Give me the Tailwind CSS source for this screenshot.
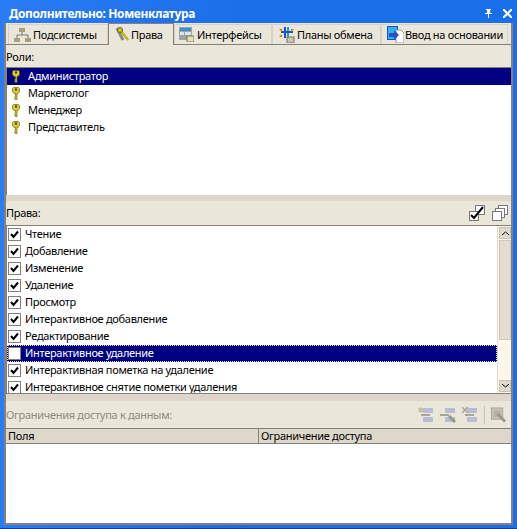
<!DOCTYPE html>
<html lang="ru">
<head>
    <meta charset="UTF-8">
    <title>Дополнительно: Номенклатура</title>
    <script src="https://cdn.jsdelivr.net/npm/@tailwindcss/browser@4"></script>
</head>
<body class="w-[517px] h-[529px] overflow-hidden bg-[#0f5fe6] font-['Noto_Sans',sans-serif] text-[11px] leading-[13px] tracking-[-0.3px] text-black">
<div class="flex flex-col h-[529px] bg-gradient-to-r from-[#2a7cf5] via-[#1a6ee8] to-[#1a6ee8] pb-[3px] px-[4px] border-b border-[#0a3fb5]">

    <!-- Title bar -->
    <div class="flex items-center h-[23px] shrink-0 pt-[3px]">
        <span class="flex-1 pl-[5px] text-[12px] font-bold tracking-[-0.37px] text-white">Дополнительно: Номенклатура</span>
        <svg class="w-[7px] h-[9px] mr-[11px]" viewBox="0 0 7 9" fill="#fff"><path d="M1 0h5v1H5v3h2v1H4v4H3V5H0V4h2V1H1z"/></svg>
        <svg class="w-[9px] h-[9px] mr-[1px]" viewBox="0 0 9 9" stroke="#fff" stroke-width="2"><path d="M0 0l9 9M9 0L0 9"/></svg>
    </div>

    <div class="flex flex-col flex-1 min-h-0 bg-[#ebe6da] border-l-[2px] border-r-[2px] border-b-[2px] border-[#85807a]">

        <!-- Tabs -->
        <div class="flex items-end h-[22px] shrink-0 pl-[2px] border-b border-[#85807a]">
            <div class="flex items-center gap-[2px] h-[20px] w-[100px] pl-[5px] border border-b-0 border-[#d8d2c4]">
                <svg class="w-[17px] h-[14px]" viewBox="0 0 17 14"><path d="M8 3v4M3 11V7h11v4" stroke="#777" fill="none"/><rect x="5" y="0" width="6" height="4" fill="#a89f7c"/><rect x="0" y="10" width="6" height="4" fill="#a89f7c"/><rect x="11" y="10" width="6" height="4" fill="#a89f7c"/></svg>
                <span>Подсистемы</span>
            </div>
            <div class="flex items-center gap-[1px] h-[22px] w-[66px] pl-[5px] -mb-px border border-b-0 border-[#85807a] bg-[#ebe6da]">
                <svg class="w-[16px] h-[15px]" viewBox="0 0 16 15"><path d="M3 1l6 12" stroke="#8a8a8a" stroke-width="3" fill="none"/><path d="M7 4l7 9" stroke="#c9b21a" stroke-width="2.500" fill="none"/><circle cx="6" cy="3" r="2.500" fill="#d4c31c" stroke="#6f6510"/></svg>
                <span>Права</span>
            </div>
            <div class="flex items-center gap-[3px] h-[20px] w-[98px] pl-[4px] border border-b-0 border-[#d8d2c4]">
                <svg class="w-[15px] h-[15px]" viewBox="0 0 15 15"><rect x="0" y="0" width="13" height="13" fill="#9aa3a8"/><rect x="1" y="1" width="11" height="3" fill="#3d8fc9"/><rect x="1" y="5" width="4" height="3" fill="#dfe6ea"/><rect x="6" y="5" width="6" height="3" fill="#dfe6ea"/><rect x="8" y="9" width="7" height="6" fill="#e8e0a8" stroke="#777"/></svg>
                <span>Интерфейсы</span>
            </div>
            <div class="flex items-center gap-[2px] h-[20px] w-[109px] pl-[6px] border border-b-0 border-[#d8d2c4]">
                <svg class="w-[16px] h-[16px]" viewBox="0 0 16 16"><rect x="5" y="0" width="2" height="11" fill="#1f4fc4"/><rect x="8" y="0" width="2" height="11" fill="#1a9ad6"/><rect x="2" y="4" width="12" height="2" fill="#1f4fc4"/><path d="M0 2l3 0 0 3zM15 2l-3 0 0 3zM0 10l3 0 0-3z" fill="#c07a2a"/><rect x="8" y="10" width="7" height="6" fill="#c8c4a8" stroke="#777"/></svg>
                <span>Планы обмена</span>
            </div>
            <div class="flex items-center gap-[1px] h-[20px] w-[127px] pl-[5px] border border-b-0 border-[#d8d2c4] whitespace-nowrap">
                <svg class="w-[17px] h-[17px]" viewBox="0 0 17 17"><rect x=".5" y=".5" width="10" height="13" fill="#2fb4ee" stroke="#1f4fc4"/><path d="M9 4h5l3 3v10H9z" fill="#fff" stroke="#8a9ab0"/><path d="M2 7h5V4l5 5-5 5v-3H2z" fill="#2a4fc0"/></svg>
                <span>Ввод на основании</span>
            </div>
        </div>

        <!-- Roles -->
        <div class="h-[22px] shrink-0 flex items-center">Роли:</div>
        <div class="h-[128px] shrink-0 bg-white border-l border-t border-[#85807a]">
            <div class="flex items-center h-[17px] pl-[5px] gap-[8px] bg-[#000080] text-white">
                <svg class="w-[8px] h-[13px]" viewBox="0 0 8 13"><path d="M1.500.5h5l1 1v3l-1.500 2H5v6H3.500L2.500 12l1-1-1-1 1-1V6.500H2L.5 4.500v-3z" fill="#dccb1e" stroke="#6b6410" stroke-width=".7"/><rect x="3" y="1.500" width="2" height="2" fill="#3a3510"/></svg>
                <span class="pb-[2px]">Администратор</span>
            </div>
            <div class="flex items-center h-[17px] pl-[5px] gap-[8px]">
                <svg class="w-[8px] h-[13px]" viewBox="0 0 8 13"><path d="M1.500.5h5l1 1v3l-1.500 2H5v6H3.500L2.500 12l1-1-1-1 1-1V6.500H2L.5 4.500v-3z" fill="#dccb1e" stroke="#6b6410" stroke-width=".7"/><rect x="3" y="1.500" width="2" height="2" fill="#3a3510"/></svg>
                <span class="pb-[2px]">Маркетолог</span>
            </div>
            <div class="flex items-center h-[17px] pl-[5px] gap-[8px]">
                <svg class="w-[8px] h-[13px]" viewBox="0 0 8 13"><path d="M1.500.5h5l1 1v3l-1.500 2H5v6H3.500L2.500 12l1-1-1-1 1-1V6.500H2L.5 4.500v-3z" fill="#dccb1e" stroke="#6b6410" stroke-width=".7"/><rect x="3" y="1.500" width="2" height="2" fill="#3a3510"/></svg>
                <span class="pb-[2px]">Менеджер</span>
            </div>
            <div class="flex items-center h-[17px] pl-[5px] gap-[8px]">
                <svg class="w-[8px] h-[13px]" viewBox="0 0 8 13"><path d="M1.500.5h5l1 1v3l-1.500 2H5v6H3.500L2.500 12l1-1-1-1 1-1V6.500H2L.5 4.500v-3z" fill="#dccb1e" stroke="#6b6410" stroke-width=".7"/><rect x="3" y="1.500" width="2" height="2" fill="#3a3510"/></svg>
                <span class="pb-[2px]">Представитель</span>
            </div>
        </div>
        <div class="h-[6px] shrink-0 bg-[#ddd6c9]"></div>

        <!-- Rights -->
        <div class="flex items-center h-[24px] shrink-0">
            <span class="flex-1 pb-[2px]">Права:</span>
            <svg class="w-[16px] h-[16px] mr-[7px]" viewBox="0 0 16 16" fill="#fff" stroke="#777"><rect x="6.500" y=".5" width="9" height="9"/><rect x=".5" y="6.500" width="9" height="9"/><path d="M2 10l3 3L14 2" fill="none" stroke="#000" stroke-width="2"/></svg>
            <svg class="w-[16px] h-[16px] mr-[3px]" viewBox="0 0 16 16" fill="#fff" stroke="#777"><rect x="6.500" y=".5" width="9" height="9"/><rect x="3.500" y="3.500" width="9" height="9"/><rect x=".5" y="6.500" width="9" height="9"/></svg>
        </div>
        <div class="flex h-[169px] shrink-0 bg-white border-l border-t border-b border-[#85807a]">
            <div class="flex-1 overflow-hidden">
                <div class="flex items-center h-[17px] pl-[1px] gap-[4px]"><span class="flex items-center justify-center w-[13px] h-[13px] border border-[#85807a] bg-white"><svg class="w-[9px] h-[9px]" viewBox="0 0 9 9"><path d="M1 4l2.500 3L8 1.500" fill="none" stroke="#000" stroke-width="2"/></svg></span><span class="pb-[2px]">Чтение</span></div>
                <div class="flex items-center h-[17px] pl-[1px] gap-[4px]"><span class="flex items-center justify-center w-[13px] h-[13px] border border-[#85807a] bg-white"><svg class="w-[9px] h-[9px]" viewBox="0 0 9 9"><path d="M1 4l2.500 3L8 1.500" fill="none" stroke="#000" stroke-width="2"/></svg></span><span class="pb-[2px]">Добавление</span></div>
                <div class="flex items-center h-[17px] pl-[1px] gap-[4px]"><span class="flex items-center justify-center w-[13px] h-[13px] border border-[#85807a] bg-white"><svg class="w-[9px] h-[9px]" viewBox="0 0 9 9"><path d="M1 4l2.500 3L8 1.500" fill="none" stroke="#000" stroke-width="2"/></svg></span><span class="pb-[2px]">Изменение</span></div>
                <div class="flex items-center h-[17px] pl-[1px] gap-[4px]"><span class="flex items-center justify-center w-[13px] h-[13px] border border-[#85807a] bg-white"><svg class="w-[9px] h-[9px]" viewBox="0 0 9 9"><path d="M1 4l2.500 3L8 1.500" fill="none" stroke="#000" stroke-width="2"/></svg></span><span class="pb-[2px]">Удаление</span></div>
                <div class="flex items-center h-[17px] pl-[1px] gap-[4px]"><span class="flex items-center justify-center w-[13px] h-[13px] border border-[#85807a] bg-white"><svg class="w-[9px] h-[9px]" viewBox="0 0 9 9"><path d="M1 4l2.500 3L8 1.500" fill="none" stroke="#000" stroke-width="2"/></svg></span><span class="pb-[2px]">Просмотр</span></div>
                <div class="flex items-center h-[17px] pl-[1px] gap-[4px]"><span class="flex items-center justify-center w-[13px] h-[13px] border border-[#85807a] bg-white"><svg class="w-[9px] h-[9px]" viewBox="0 0 9 9"><path d="M1 4l2.500 3L8 1.500" fill="none" stroke="#000" stroke-width="2"/></svg></span><span class="pb-[2px]">Интерактивное добавление</span></div>
                <div class="flex items-center h-[17px] pl-[1px] gap-[4px]"><span class="flex items-center justify-center w-[13px] h-[13px] border border-[#85807a] bg-white"><svg class="w-[9px] h-[9px]" viewBox="0 0 9 9"><path d="M1 4l2.500 3L8 1.500" fill="none" stroke="#000" stroke-width="2"/></svg></span><span class="pb-[2px]">Редактирование</span></div>
                <div class="flex items-center h-[17px] gap-[4px] bg-[#000080] text-white border border-dotted border-[#e8e0a0]"><span class="w-[13px] h-[13px] border border-[#85807a] bg-white"></span><span class="pb-[2px]">Интерактивное удаление</span></div>
                <div class="flex items-center h-[17px] pl-[1px] gap-[4px]"><span class="flex items-center justify-center w-[13px] h-[13px] border border-[#85807a] bg-white"><svg class="w-[9px] h-[9px]" viewBox="0 0 9 9"><path d="M1 4l2.500 3L8 1.500" fill="none" stroke="#000" stroke-width="2"/></svg></span><span class="pb-[2px]">Интерактивная пометка на удаление</span></div>
                <div class="flex items-center h-[17px] pl-[1px] gap-[4px]"><span class="flex items-center justify-center w-[13px] h-[13px] border border-[#85807a] bg-white"><svg class="w-[9px] h-[9px]" viewBox="0 0 9 9"><path d="M1 4l2.500 3L8 1.500" fill="none" stroke="#000" stroke-width="2"/></svg></span><span class="pb-[2px]">Интерактивное снятие пометки удаления</span></div>
            </div>
            <!-- Scrollbar -->
            <div class="flex flex-col w-[14px] shrink-0 bg-[#fdf6ea] border-l border-[#e0dace] pl-px">
                <div class="flex items-center justify-center h-[12px] shrink-0 mt-px bg-[#dfdacb] border border-[#c9c3b4]"><svg class="w-[7px] h-[4px]" viewBox="0 0 7 4"><path d="M0 4l3.500-3L7 4" fill="none" stroke="#000"/></svg></div>
                <div class="h-[100px] shrink-0 mt-px bg-[#e3decf] border border-[#cfc9ba]"></div>
                <div class="flex-1"></div>
                <div class="flex items-center justify-center h-[12px] shrink-0 mb-px bg-[#dfdacb] border border-[#c9c3b4]"><svg class="w-[7px] h-[4px]" viewBox="0 0 7 4"><path d="M0 0l3.500 3L7 0" fill="none" stroke="#000"/></svg></div>
            </div>
        </div>
        <div class="h-[7px] shrink-0 bg-[#ddd6c9]"></div>

        <!-- Data restrictions -->
        <div class="flex items-center h-[27px] shrink-0 text-[#8f8b82]">
            <span class="flex-1">Ограничения доступа к данным:</span>
            <div class="flex items-center gap-[6px] pr-[5px]">
                <svg class="w-[16px] h-[16px]" viewBox="0 0 16 16"><rect x="5" y="1" width="10" height="5" fill="#b9bcd6"/><rect x="5" y="10" width="10" height="5" fill="#b9bcd6"/><rect x="3" y="7" width="9" height="2" fill="#a9a698"/><path d="M3 0l1 1 2 0-1 2 1 2-2 0-1 1-1-1-2 0 1-2-1-2 2 0z" fill="#c4c0a4"/></svg>
                <svg class="w-[16px] h-[16px]" viewBox="0 0 16 16"><rect x="5" y="1" width="10" height="5" fill="#b9bcd6"/><rect x="5" y="10" width="10" height="5" fill="#b9bcd6"/><rect x="0" y="7" width="9" height="2" fill="#a9a698"/><path d="M9 9l6 6" stroke="#9a978a" stroke-width="3"/></svg>
                <svg class="w-[16px] h-[16px]" viewBox="0 0 16 16"><rect x="5" y="1" width="10" height="5" fill="#b9bcd6"/><rect x="5" y="10" width="10" height="5" fill="#b9bcd6"/><rect x="3" y="7" width="9" height="2" fill="#a9a698"/><path d="M0 0l6 6M6 0L0 6" stroke="#a9a698" stroke-width="1.500"/></svg>
                <span class="w-px h-[18px] bg-[#c9c3b4]"></span>
                <svg class="w-[15px] h-[16px]" viewBox="0 0 16 16"><rect x=".5" y=".5" width="12" height="12" fill="#c6c3b6" stroke="#a9a698"/><rect x="3" y="3" width="7" height="7" fill="#b5b2a4"/><path d="M7 7l8 8" stroke="#9a978a" stroke-width="3"/></svg>
            </div>
        </div>
        <div class="flex h-[16px] shrink-0 bg-[#ded8cb] border-t border-b border-[#85807a]">
            <div class="w-[253px] pl-[2px] pb-[2px] border-r border-[#85807a] flex items-center">Поля</div>
            <div class="flex-1 pl-[2px] pb-[2px] flex items-center">Ограничение доступа</div>
        </div>
        <div class="flex-1 bg-white"></div>
    </div>
</div>
</body>
</html>
